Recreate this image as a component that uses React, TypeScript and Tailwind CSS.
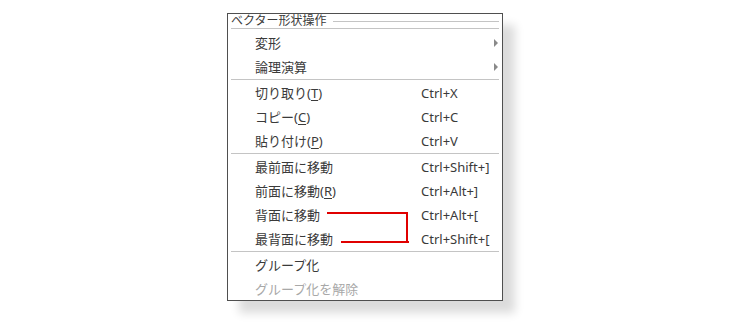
import React from 'react';

type Item = { label: React.ReactNode; shortcut?: string; sub?: boolean; disabled?: boolean };

const U = ({ c }: { c: string }) => (
  <>
    (<span className="underline underline-offset-2">{c}</span>)
  </>
);

const groups: Item[][] = [
  [
    { label: '変形', sub: true },
    { label: '論理演算', sub: true },
  ],
  [
    { label: <>切り取り<U c="T" /></>, shortcut: 'Ctrl+X' },
    { label: <>コピー<U c="C" /></>, shortcut: 'Ctrl+C' },
    { label: <>貼り付け<U c="P" /></>, shortcut: 'Ctrl+V' },
  ],
  [
    { label: '最前面に移動', shortcut: 'Ctrl+Shift+]' },
    { label: <>前面に移動<U c="R" /></>, shortcut: 'Ctrl+Alt+]' },
    { label: '背面に移動', shortcut: 'Ctrl+Alt+[' },
    { label: '最背面に移動', shortcut: 'Ctrl+Shift+[' },
  ],
  [
    { label: 'グループ化' },
    { label: 'グループ化を解除', disabled: true },
  ],
];

function Row({ item }: { item: Item }) {
  return (
    <div
      className={`h-6 flex items-center pl-[27px] pr-[3px] ${
        item.disabled ? 'text-[#a8a8a8]' : 'text-[#3a3a3a]'
      }`}
    >
      <span className="w-[166px] shrink-0 whitespace-nowrap">{item.label}</span>
      <span className="flex-1 whitespace-nowrap">{item.shortcut}</span>
      {item.sub && (
        <svg width="4" height="8" viewBox="0 0 4 8" className="mr-[1px]">
          <path d="M0 0L4 4L0 8Z" fill="#8a8a8a" />
        </svg>
      )}
    </div>
  );
}

export default function App() {
  return (
    <div className="w-[730px] h-[324px] bg-white pl-[227px] pt-[13px] font-['Noto_Sans','Noto_Sans_CJK_JP',sans-serif] text-[13px] leading-none">
      <div className="relative w-[276px] h-[288px] border border-[#4f4f4f] bg-white shadow-[12px_12px_9px_rgba(0,0,0,0.14)]">
        {/* title */}
        <div className="h-[14px] flex items-center pl-[3px] pr-[3px] gap-[6px]">
          <span className="text-[12px] text-[#3a3a3a] whitespace-nowrap">ベクター形状操作</span>
          <div className="flex-1 h-px bg-[#c4c4c4]" />
        </div>
        <div className="mx-[3px] h-px bg-[#c4c4c4]" />
        <div className="h-[2px]" />
        {groups.map((g, gi) => (
          <div key={gi}>
            {gi > 0 && <div className="mx-[3px] h-[2px] border-t border-[#c4c4c4]" />}
            {g.map((it, i) => (
              <Row key={i} item={it} />
            ))}
          </div>
        ))}

        {/* red annotation */}
        <div className="absolute left-[99px] top-[198px] w-[81px] h-[31px] border-t-2 border-r-2 border-[#e00000]" />
        <div className="absolute left-[113px] top-[227px] w-[68px] h-[2px] bg-[#e00000]" />
      </div>
    </div>
  );
}
